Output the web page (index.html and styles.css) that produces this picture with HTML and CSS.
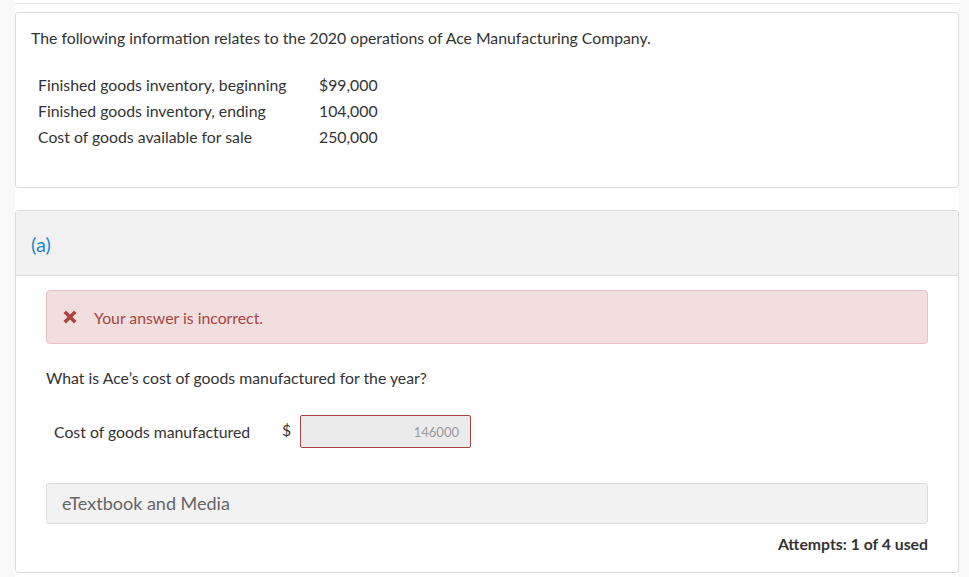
FILE: index.html
```html
<!DOCTYPE html>
<html>
<head>
<meta charset="utf-8">
<link rel="stylesheet" href="styles.css">
</head>
<body>
<div class="page">
  <div class="card intro">
    <p class="lead">The following information relates to the 2020 operations of Ace Manufacturing Company.</p>
    <table class="data">
      <tr><td class="lbl">Finished goods inventory, beginning</td><td class="val">$99,000</td></tr>
      <tr><td class="lbl">Finished goods inventory, ending</td><td class="val">104,000</td></tr>
      <tr><td class="lbl">Cost of goods available for sale</td><td class="val">250,000</td></tr>
    </table>
  </div>

  <div class="card part">
    <div class="part-head">(a)</div>
    <div class="part-body">
      <div class="alert">
        <svg class="x-icon" width="14" height="14" viewBox="0 0 14 14"><path d="M0.5 3 L3 0.5 L7 4.5 L11 0.5 L13.5 3 L9.5 7 L13.5 11 L11 13.5 L7 9.5 L3 13.5 L0.5 11 L4.5 7 Z" fill="#a94442"/></svg>
        <span>Your answer is incorrect.</span>
      </div>
      <p class="question">What is Ace’s cost of goods manufactured for the year?</p>
      <div class="answer-row">
        <span class="answer-label">Cost of goods manufactured</span>
        <span class="dollar">$</span>
        <div class="input">146000</div>
      </div>
      <div class="media">eTextbook and Media</div>
      <div class="attempts">Attempts: 1 of 4 used</div>
    </div>
  </div>
</div>
</body>
</html>
```
FILE: styles.css
```css
html, body {
  margin: 0;
  padding: 0;
}
body {
  background: #f9f9f9;
  font-family: Lato, "Open Sans", sans-serif;
  color: #333;
  font-size: 15.8px;
}
.page {
  margin-left: 15px;
  width: 944px;
  min-height: 577px;
  background: #fff;
  padding-top: 3px;
  box-sizing: border-box;
}
.page::before {
  content: "";
  display: block;
  height: 1px;
  background: #e6e6e6;
  margin-bottom: 8px;
}
.card {
  border: 1px solid #dcdcdc;
  border-radius: 3px;
  background: #fff;
}
.intro {
  padding: 15px 15px 36px;
  height: 176px;
  box-sizing: border-box;
}
.lead {
  margin: 0;
  line-height: 20px;
}
.data {
  border-collapse: collapse;
  margin: 24px 0 0 7px;
}
.data td {
  padding: 0;
  height: 26px;
  line-height: 26px;
}
.data .lbl {
  width: 281px;
}
.part {
  margin-top: 22px;
  height: 363px;
  box-sizing: border-box;
}
.part-head {
  background: #f2f2f2;
  height: 64px;
  border-bottom: 1px solid #dcdcdc;
  padding-left: 15px;
  line-height: 66px;
  color: #1e88d6;
  font-size: 20px;
}
.part-body {
  padding: 14px 30px 0;
}
.alert {
  height: 54px;
  box-sizing: border-box;
  background: #f2dede;
  border: 1px solid #e9bfc6;
  border-radius: 4px;
  display: flex;
  align-items: center;
  padding-left: 16px;
  color: #a94442;
}
.x-icon {
  margin-right: 17px;
}
.question {
  margin: 24px 0 0;
  line-height: 20px;
}
.answer-row {
  display: flex;
  align-items: center;
  margin-top: 27px;
  padding-left: 8px;
}
.answer-label {
  width: 228px;
}
.dollar {
  width: 18px;
  margin-top: -4px;
}
.input {
  width: 171px;
  height: 33px;
  box-sizing: border-box;
  background: #ebebeb;
  border: 1px solid #a94442;
  border-radius: 2px;
  text-align: right;
  padding-right: 11px;
  line-height: 32px;
  font-size: 13px;
  color: #999;
}
.media {
  margin-top: 35px;
  height: 41px;
  box-sizing: border-box;
  background: #f2f2f2;
  border: 1px solid #dcdcdc;
  border-radius: 3px;
  padding-left: 15px;
  line-height: 38px;
  font-size: 18px;
  color: #666;
}
.attempts {
  text-align: right;
  font-weight: bold;
  margin-top: 10px;
  line-height: 20px;
}
```
